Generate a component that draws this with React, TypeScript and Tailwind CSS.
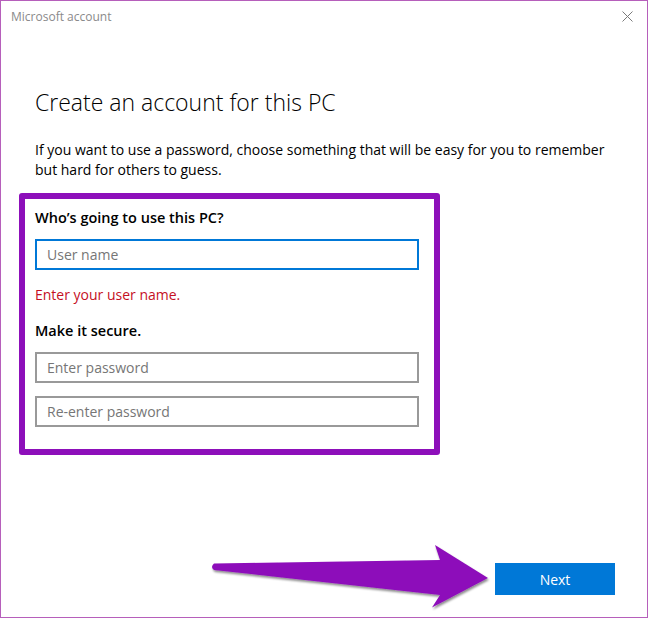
import React from 'react'

const font = { fontFamily: '"Open Sans", "Noto Sans", "Liberation Sans", sans-serif' }

function Field({ placeholder, active }: { placeholder: string; active?: boolean }) {
  return (
    <div
      className={
        'flex h-[31px] w-[384px] items-center border-2 px-[10px] text-[14px] text-[#767676] ' +
        (active ? 'border-[#0078d7]' : 'border-[#999999]')
      }
    >
      {placeholder}
    </div>
  )
}

function Arrow() {
  return (
    <svg className="pointer-events-none absolute left-0 top-0" width="650" height="618" viewBox="0 0 650 618">
      <defs>
        <filter id="sh" x="-10%" y="-20%" width="120%" height="150%">
          <feDropShadow dx="1" dy="2" stdDeviation="1.2" floodColor="#000" floodOpacity="0.45" />
        </filter>
      </defs>
      <path
        d="M214 563.5 L440 560 L435 545 L488 578 L432 607.5 L440 595 L214 570 Q210 567 214 563.5 Z"
        fill="#8d0fba"
        filter="url(#sh)"
      />
    </svg>
  )
}

export default function App() {
  return (
    <div className="relative h-[618px] w-[650px] bg-white" style={font}>
      <div className="flex h-[618px] w-[648px] flex-col border border-[#b65fbb] bg-white">
        <div className="flex h-[31px] items-center justify-between pl-[10px] pr-[14px]">
          <span className="text-[12px] text-[#8a8a8a]">Microsoft account</span>
          <svg width="11" height="11" viewBox="0 0 11 11">
            <path d="M0.5 0.5 L10.5 10.5 M10.5 0.5 L0.5 10.5" stroke="#7a7a7a" strokeWidth="1" />
          </svg>
        </div>

        <div className="pl-[34px]">
          <h1 className="mt-[54px] text-[23px] font-light leading-[32px] text-black">Create an account for this PC</h1>
          <p className="mt-[22px] w-[590px] text-[14px] leading-[20px] text-black">
            If you want to use a password, choose something that will be easy for you to remember but hard for others to guess.
          </p>
        </div>

        <div className="ml-[18px] mt-[13px] w-[421px] rounded-[3px] border-[6px] border-[#8d0fba] pb-[22px] pl-[10px] pr-[15px] pt-[9px]">
          <div className="text-[14.5px] font-semibold leading-[20px] text-black">Who’s going to use this PC?</div>
          <div className="mt-[11px]">
            <Field placeholder="User name" active />
          </div>
          <div className="mt-[15px] text-[14px] leading-[20px] text-[#c50f1f]">Enter your user name.</div>
          <div className="mt-[16px] text-[14.5px] font-semibold leading-[20px] text-black">Make it secure.</div>
          <div className="mt-[11px]">
            <Field placeholder="Enter password" />
          </div>
          <div className="mt-[13px]">
            <Field placeholder="Re-enter password" />
          </div>
        </div>

        <div className="mt-auto flex justify-end pb-[22px] pr-[32px]">
          <button className="h-[32px] w-[120px] bg-[#0078d7] text-[14px] text-white">Next</button>
        </div>
      </div>
      <Arrow />
    </div>
  )
}
